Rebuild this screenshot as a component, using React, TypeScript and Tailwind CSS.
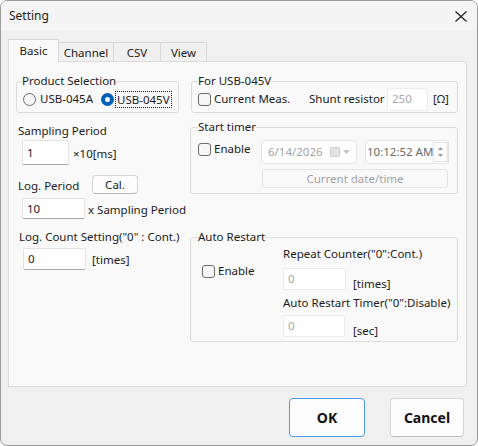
import React from 'react'

function CheckBox() {
  return (
    <span className="inline-block w-[13px] h-[13px] rounded-[3px] border border-[#6b6b6b] bg-[#f6f6f6] shrink-0" />
  )
}

function Radio({ checked }: { checked?: boolean }) {
  if (checked) {
    return (
      <span className="w-[13px] h-[13px] rounded-full bg-[#005fb8] flex items-center justify-center shrink-0">
        <span className="w-[5px] h-[5px] rounded-full bg-white" />
      </span>
    )
  }
  return <span className="w-[13px] h-[13px] rounded-full border border-[#6b6b6b] bg-[#f6f6f6] shrink-0" />
}

function TextBox({ value, className, disabled }: { value: string; className: string; disabled?: boolean }) {
  return (
    <div
      className={
        'bg-white border rounded-[2px] flex items-center pl-[4px] shrink-0 ' +
        (disabled
          ? 'border-[#ececec] text-[#a8a8a8] '
          : 'border-[#e2e2e2] border-b-[#a8a8a8] text-[#1b1b1b] ') +
        className
      }
    >
      {value}
    </div>
  )
}

const tabs = ['Basic', 'Channel', 'CSV', 'View']

export default function App() {
  return (
    <div className="w-[478px] h-[446px] bg-[#f0f0f0] border border-[#9b9b9b] rounded-[7px] overflow-hidden flex flex-col text-[11.5px] leading-[16px] text-[#1b1b1b] font-['Noto_Sans','Liberation_Sans',sans-serif]">
      {/* title bar */}
      <div className="h-[30px] shrink-0 bg-[#f4f4f4] flex items-center justify-between pl-[8px] pr-[10px]">
        <span className="text-[12px]">Setting</span>
        <svg width="12" height="11" viewBox="0 0 12 11" className="text-[#1b1b1b]">
          <path d="M0.5 0.5 L11.5 10.5 M11.5 0.5 L0.5 10.5" stroke="currentColor" strokeWidth="1.1" />
        </svg>
      </div>

      {/* tabs */}
      <div className="mt-[8px] ml-[7px] h-[22px] flex items-end">
        {tabs.map((t, i) =>
          i === 0 ? (
            <div
              key={t}
              className="relative z-10 w-[51px] h-[23px] -mb-px bg-[#f9f9f9] border border-b-0 border-[#d9d9d9] flex justify-center pt-[3px]"
            >
              {t}
            </div>
          ) : (
            <div
              key={t}
              className={
                'h-[19px] -ml-px bg-[#f0f0f0] border border-b-0 border-[#d9d9d9] flex justify-center pt-[2px] ' +
                (i === 1 ? 'w-[56px]' : i === 2 ? 'w-[48px]' : 'w-[47px]')
              }
            >
              {t}
            </div>
          )
        )}
      </div>

      {/* panel */}
      <div className="ml-[7px] w-[459px] h-[326px] shrink-0 bg-[#f9f9f9] border border-[#dadada] flex pl-[7px] gap-[11px]">
        {/* left column */}
        <div className="w-[163px] shrink-0 flex flex-col">
          <fieldset className="mt-[11px] h-[40px] border border-[#dcdcdc] rounded-[3px] px-[5px]">
            <legend>Product Selection</legend>
            <div className="mt-[1px] h-[18px] flex items-center ml-px">
              <div className="w-[78px] flex items-center gap-[4px]">
                <Radio />
                <span>USB-045A</span>
              </div>
              <Radio checked />
              <span className="ml-px border border-dotted border-[#222] px-[1px] leading-[15px]">USB-045V</span>
            </div>
          </fieldset>

          <div className="mt-[10px] ml-[2px]">Sampling Period</div>
          <div className="mt-px ml-[6px] flex items-center">
            <TextBox value="1" className="w-[47px] h-[25px]" />
            <span className="ml-[4px] mt-[3px] whitespace-nowrap">×10[ms]</span>
          </div>

          <div className="mt-[10px] h-[19px] flex items-center">
            <span className="ml-[2px] w-[74px] mt-[3px]">Log. Period</span>
            <div className="w-[46px] h-[19px] bg-[#fdfdfd] border border-[#d4d4d4] border-b-[#b8b8b8] rounded-[4px] flex items-center justify-center">
              Cal.
            </div>
          </div>
          <div className="mt-[4px] ml-[6px] flex items-center">
            <TextBox value="10" className="w-[63px] h-[21px]" />
            <span className="ml-[3px] mt-[2px] whitespace-nowrap">x Sampling Period</span>
          </div>

          <div className="mt-[10px] ml-[3px] whitespace-nowrap">Log. Count Setting("0" : Cont.)</div>
          <div className="mt-[3px] ml-[7px] flex items-center">
            <TextBox value="0" className="w-[63px] h-[22px]" />
            <span className="ml-[6px] mt-[1px] whitespace-nowrap">[times]</span>
          </div>
        </div>

        {/* right column */}
        <div className="w-[268px] shrink-0 flex flex-col">
          <fieldset className="mt-[11px] ml-px h-[40px] border border-[#dcdcdc] rounded-[3px] px-[6px]">
            <legend>For USB-045V</legend>
            <div className="-mt-[2px] h-[24px] flex items-center">
              <div className="w-[111px] flex items-center gap-[3px]">
                <CheckBox />
                <span>Current Meas.</span>
              </div>
              <span className="w-[78px] whitespace-nowrap">Shunt resistor</span>
              <TextBox value="250" disabled className="w-[41px] h-[23px]" />
              <span className="ml-[5px]">[Ω]</span>
            </div>
          </fieldset>

          <fieldset className="mt-[6px] h-[75px] border border-[#dcdcdc] rounded-[3px] px-[7px]">
            <legend>Start timer</legend>
            <div className="mt-[5px] flex items-start">
              <div className="w-[63px] mt-[1px] flex items-center gap-[3px]">
                <CheckBox />
                <span>Enable</span>
              </div>
              <div className="w-[96px] h-[24px] bg-white border border-[#e3e3e3] rounded-[2px] flex items-center pl-[6px] text-[#a3a3a3]">
                <span className="w-[62px]">6/14/2026</span>
                <span className="w-[10px] h-[10px] rounded-[2px] bg-[#e4e4e4] border border-[#cfcfcf]" />
                <svg width="7" height="4" viewBox="0 0 7 4" className="ml-[3px]">
                  <path d="M0 0 L7 0 L3.5 4 Z" fill="#c4c4c4" />
                </svg>
              </div>
              <div className="ml-[8px] w-[84px] h-[24px] bg-white border border-[#e3e3e3] rounded-[2px] flex items-center text-[#6a6a6a] overflow-hidden">
                <span className="w-[67px] overflow-hidden whitespace-nowrap pl-[1px]">10:12:52 AM</span>
                <div className="w-[15px] h-[20px] border border-[#e3e3e3] flex flex-col items-center justify-center gap-[4px]">
                  <svg width="5" height="3" viewBox="0 0 5 3">
                    <path d="M0 3 L5 3 L2.5 0 Z" fill="#9a9a9a" />
                  </svg>
                  <svg width="5" height="3" viewBox="0 0 5 3">
                    <path d="M0 0 L5 0 L2.5 3 Z" fill="#9a9a9a" />
                  </svg>
                </div>
              </div>
            </div>
            <div className="mt-[5px] ml-[64px] w-[186px] h-[19px] bg-[#f9f9f9] border border-[#e4e4e4] rounded-[3px] flex items-center justify-center text-[#a3a3a3]">
              Current date/time
            </div>
          </fieldset>

          <fieldset className="mt-[35px] w-[261px] h-[113px] border border-[#dcdcdc] rounded-[3px] px-[7px]">
            <legend>Auto Restart</legend>
            <div className="pt-[1px] flex">
              <div className="w-[85px] pl-[4px]">
                <div className="mt-[17px] flex items-center gap-[3px]">
                  <CheckBox />
                  <span>Enable</span>
                </div>
              </div>
              <div className="flex flex-col">
                <span className="whitespace-nowrap">Repeat Counter("0":Cont.)</span>
                <div className="mt-[6px] flex items-end">
                  <TextBox value="0" disabled className="w-[63px] h-[22px]" />
                  <span className="ml-[7px] -mb-[2px]">[times]</span>
                </div>
                <span className="mt-[5px] whitespace-nowrap">Auto Restart Timer("0":Disable)</span>
                <div className="mt-[4px] flex items-end">
                  <TextBox value="0" disabled className="w-[62px] h-[22px]" />
                  <span className="ml-[8px] -mb-[2px]">[sec]</span>
                </div>
              </div>
            </div>
          </fieldset>
        </div>
      </div>

      {/* buttons */}
      <div className="mt-[11px] flex justify-end gap-[25px] pr-[13px]">
        <button className="w-[76px] h-[39px] bg-[#fdfdfd] border border-[#4d9be6] rounded-[4px] text-[14px] font-bold text-[#111]">
          OK
        </button>
        <button className="w-[74px] h-[39px] bg-[#fdfdfd] border border-[#d6d6d6] border-b-[#bdbdbd] rounded-[4px] text-[14px] font-bold text-[#111]">
          Cancel
        </button>
      </div>
    </div>
  )
}
